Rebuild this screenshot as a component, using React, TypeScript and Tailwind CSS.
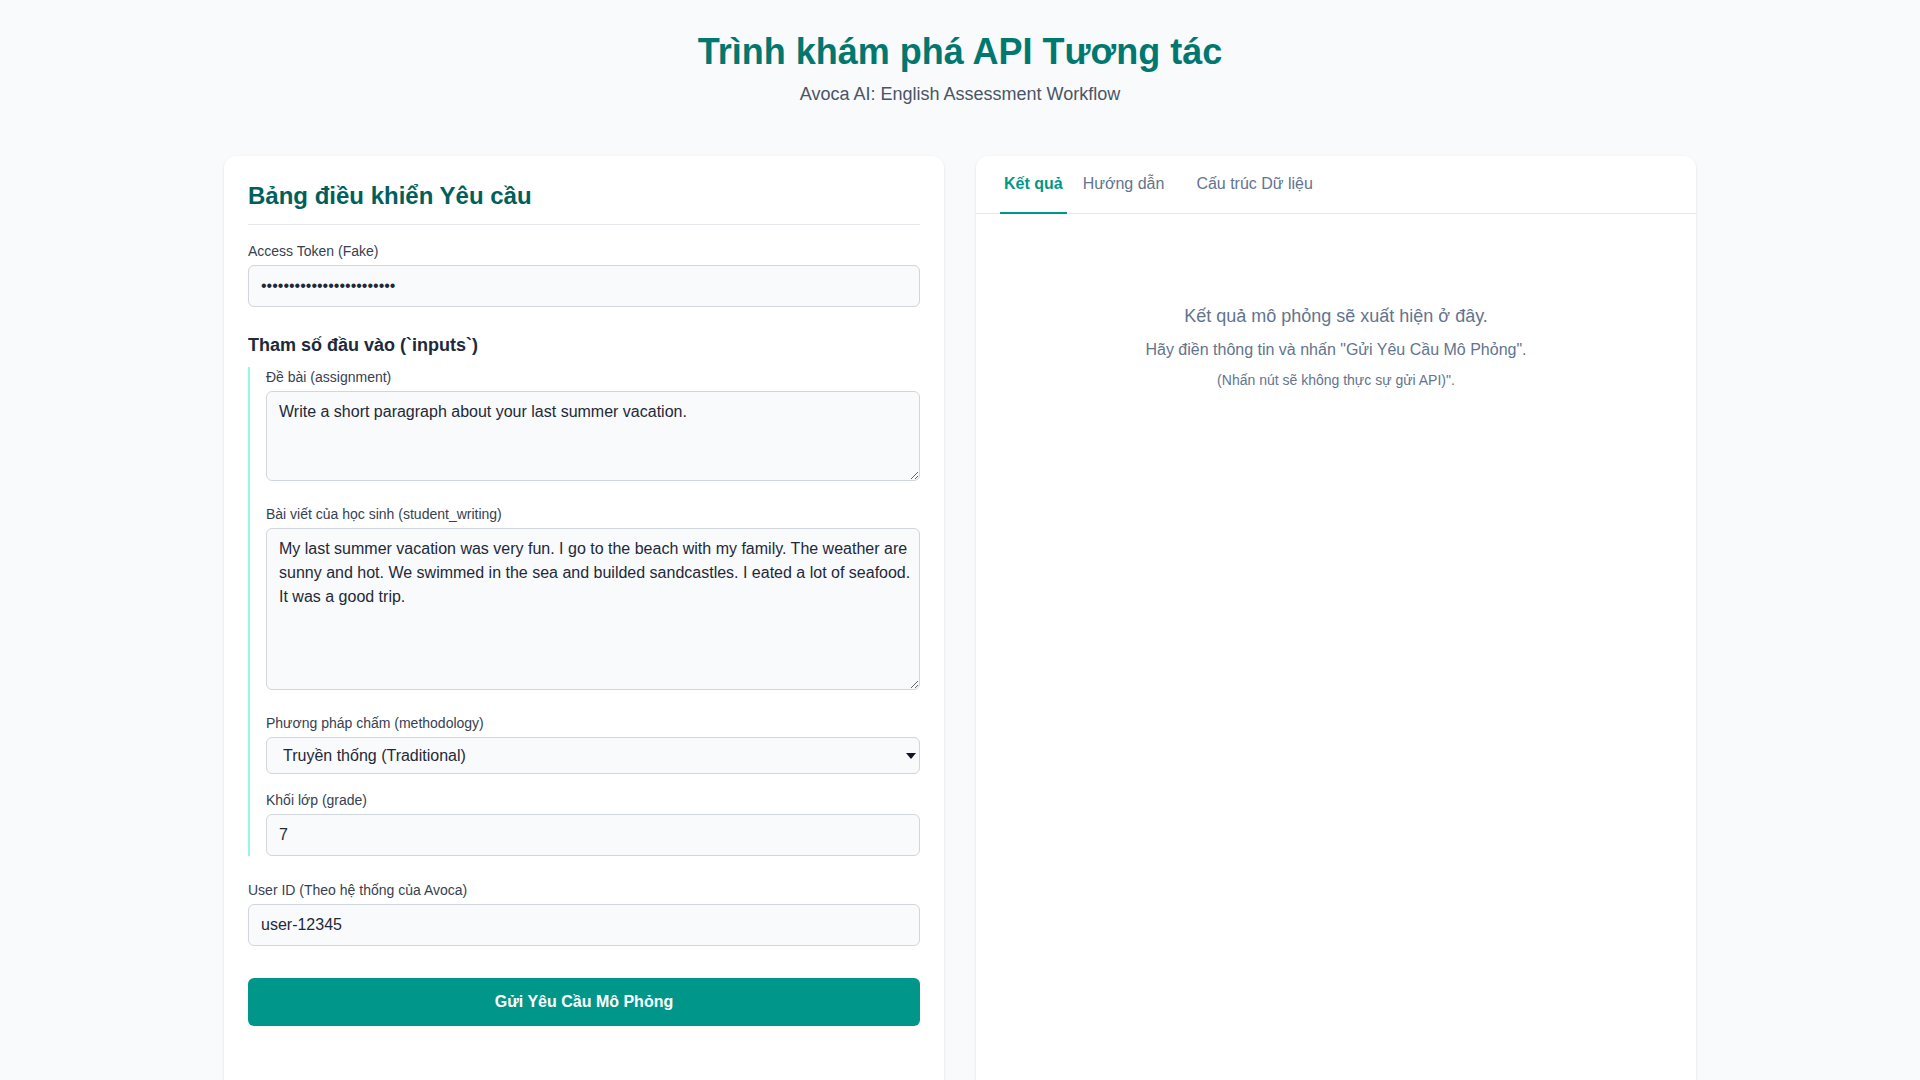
import React, { useEffect } from "react";

const ROOT_SCROLLBAR = [
  "[&::-webkit-scrollbar]:w-2",
  "[&::-webkit-scrollbar-track]:bg-slate-100",
  "[&::-webkit-scrollbar-thumb]:bg-slate-300",
  "[&::-webkit-scrollbar-thumb]:rounded-full",
];

export default function App() {
  useEffect(() => {
    document.documentElement.classList.add(...ROOT_SCROLLBAR);
  }, []);

  return (
    <div className="min-h-screen bg-gray-50 font-['Liberation_Sans',Arial,sans-serif] text-gray-800">
      <div className="container mx-auto px-8 pt-8 pb-9">
        <header className="mb-12 text-center">
          <h1 className="text-4xl font-bold text-teal-700">Trình khám phá API Tương tác</h1>
          <p className="mt-2 text-lg text-gray-600">Avoca AI: English Assessment Workflow</p>
        </header>

        <div className="grid grid-cols-2 gap-8">
          {/* Left card */}
          <div className="rounded-xl bg-white p-6 pb-16 shadow-sm">
            <h2 className="mb-4 border-b border-gray-200 pb-3 text-2xl font-bold text-teal-800">
              Bảng điều khiển Yêu cầu
            </h2>

            <div>
              <label className="mb-1 block text-sm text-gray-700">Access Token (Fake)</label>
              <input
                type="password"
                defaultValue="fake-token-abc123xyz4567"
                className="w-full rounded-md border border-gray-300 bg-gray-50 px-3 py-2 text-gray-800"
              />
            </div>

            <div className="mt-6">
              <h3 className="mb-2 text-lg font-semibold text-gray-800">Tham số đầu vào (`inputs`)</h3>
              <div className="space-y-4 border-l-2 border-teal-200 pl-4">
                <div>
                  <label className="mb-1 block text-sm text-gray-700">Đề bài (assignment)</label>
                  <textarea
                    rows={3}
                    defaultValue="Write a short paragraph about your last summer vacation."
                    className="w-full rounded-md border border-gray-300 bg-gray-50 py-2 pr-2 pl-3 text-gray-800"
                  />
                </div>
                <div>
                  <label className="mb-1 block text-sm text-gray-700">Bài viết của học sinh (student_writing)</label>
                  <textarea
                    rows={6}
                    defaultValue="My last summer vacation was very fun. I go to the beach with my family. The weather are sunny and hot. We swimmed in the sea and builded sandcastles. I eated a lot of seafood. It was a good trip."
                    className="w-full rounded-md border border-gray-300 bg-gray-50 py-2 pr-2 pl-3 text-gray-800"
                  />
                </div>
                <div>
                  <label className="mb-1 block text-sm text-gray-700">Phương pháp chấm (methodology)</label>
                  <div className="relative">
                    <select
                      defaultValue="traditional"
                      className="h-[37px] w-full appearance-none rounded-md border border-gray-300 bg-gray-50 py-0 pr-8 pl-4 text-gray-800"
                    >
                      <option value="traditional">Truyền thống (Traditional)</option>
                      <option value="modern">Hiện đại (Modern)</option>
                    </select>
                    <svg
                      viewBox="0 0 10 6"
                      className="pointer-events-none absolute top-1/2 right-1 h-[6px] w-[10px] -translate-y-1/2 text-gray-900"
                      fill="currentColor"
                    >
                      <path d="M0 0h10L5 6z" />
                    </svg>
                  </div>
                </div>
                <div>
                  <label className="mb-1 block text-sm text-gray-700">Khối lớp (grade)</label>
                  <input
                    type="text"
                    defaultValue="7"
                    className="w-full rounded-md border border-gray-300 bg-gray-50 px-3 py-2 text-gray-800"
                  />
                </div>
              </div>
            </div>

            <div className="mt-6">
              <label className="mb-1 block text-sm text-gray-700">User ID (Theo hệ thống của Avoca)</label>
              <input
                type="text"
                defaultValue="user-12345"
                className="w-full rounded-md border border-gray-300 bg-gray-50 px-3 py-2 text-gray-800"
              />
            </div>

            <button className="mt-8 w-full rounded-md bg-teal-600 py-3 font-semibold text-white">
              Gửi Yêu Cầu Mô Phỏng
            </button>
          </div>

          {/* Right card */}
          <div className="overflow-hidden rounded-xl bg-white shadow-sm">
            <nav className="flex border-b border-gray-200 px-6">
              <button className="-mb-px border-b-2 border-teal-600 px-1 py-4 font-semibold text-teal-600">
                Kết quả
              </button>
              <button className="-mb-px border-b-2 border-transparent px-4 py-4 text-slate-500">
                Hướng dẫn
              </button>
              <button className="-mb-px border-b-2 border-transparent px-4 py-4 text-slate-500">
                Cấu trúc Dữ liệu
              </button>
            </nav>
            <div className="p-6">
              <div className="py-16 text-center text-slate-500">
                <p className="text-lg">Kết quả mô phỏng sẽ xuất hiện ở đây.</p>
                <p className="mt-2 text-base">Hãy điền thông tin và nhấn "Gửi Yêu Cầu Mô Phỏng".</p>
                <p className="mt-2 text-sm">(Nhấn nút sẽ không thực sự gửi API)".</p>
              </div>
            </div>
          </div>
        </div>
      </div>
    </div>
  );
}
